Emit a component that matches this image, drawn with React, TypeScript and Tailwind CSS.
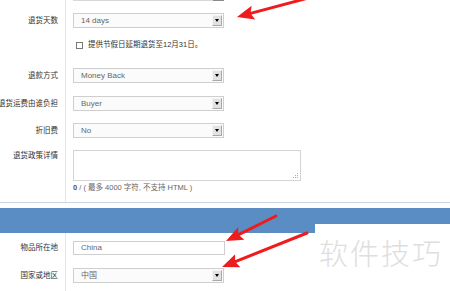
import React from 'react';

const font = { fontFamily: '"Liberation Sans", "Noto Sans CJK SC", sans-serif' };

function DropButton() {
  return (
    <div className="absolute right-[1px] top-[1px] bottom-[1px] w-[10px] bg-[#e2e2e2] border border-[#a8a8a8] border-t-[#f4f4f4] border-l-[#f4f4f4] flex items-center justify-center">
      <div className="w-0 h-0 border-l-[2.5px] border-r-[2.5px] border-t-[3px] border-l-transparent border-r-transparent border-t-black" />
    </div>
  );
}

function SelectBox({ value }: { value: string }) {
  return (
    <div className="relative w-[151px] h-[15px] border border-[#cfcfcf] bg-[#fbfbfb] flex items-center pl-[7px] text-[8px] text-[#666]">
      {value}
      <DropButton />
    </div>
  );
}

function Row({ label, pt, children, labelH = 15 }: { label?: string; pt: number; children?: React.ReactNode; labelH?: number }) {
  return (
    <div className="flex">
      <div className="w-[66px] shrink-0 border-r border-[#e6e6e6]" style={{ paddingTop: pt }}>
        {label && (
          <div className="flex items-center justify-end pr-[7px] whitespace-nowrap text-[7.5px] text-[#333]" style={{ height: labelH }}>
            {label}
          </div>
        )}
      </div>
      <div className="pl-[7px]" style={{ paddingTop: pt }}>
        {children}
      </div>
    </div>
  );
}

function Arrow({ x1, y1, x2, y2 }: { x1: number; y1: number; x2: number; y2: number }) {
  const dx = x2 - x1;
  const dy = y2 - y1;
  const len = Math.sqrt(dx * dx + dy * dy);
  const ux = dx / len;
  const uy = dy / len;
  const px = -uy;
  const py = ux;
  const headLen = 17;
  const headW = 7;
  const bx = x2 - ux * headLen;
  const by = y2 - uy * headLen;
  const head = `${x2},${y2} ${bx + px * headW},${by + py * headW} ${bx + ux * 3},${by + uy * 3} ${bx - px * headW},${by - py * headW}`;
  return (
    <g>
      <line x1={x1} y1={y1} x2={bx + ux * 4} y2={by + uy * 4} stroke="#ee1c1c" strokeWidth={3} strokeLinecap="round" />
      <polygon points={head} fill="#ee1c1c" />
    </g>
  );
}

export default function App() {
  return (
    <div className="relative w-[450px] h-[291px] overflow-hidden bg-white" style={font}>
      {/* top part of the form */}
      <div className="flex h-[1px]">
        <div className="w-[66px] shrink-0 border-r border-[#e6e6e6]" />
        <div className="pl-[7px] flex">
          <div className="w-[140px] h-[1px] bg-[#d8d8d8]" />
          <div className="w-[11px] h-[1px] bg-[#8a8a8a]" />
        </div>
      </div>

      <Row label="退货天数" pt={12}>
        <SelectBox value="14 days" />
      </Row>

      <Row pt={13}>
        <div className="flex items-center h-[8px] pl-[3px]">
          <div className="w-[7px] h-[7px] border border-[#777] bg-white" />
          <span className="ml-[5px] text-[7.5px] text-[#333] whitespace-nowrap">提供节假日延期退货至12月31日。</span>
        </div>
      </Row>

      <Row label="退款方式" pt={19}>
        <SelectBox value="Money Back" />
      </Row>

      <Row label="退货运费由谁负担" pt={13}>
        <SelectBox value="Buyer" />
      </Row>

      <Row label="折旧费" pt={12}>
        <SelectBox value="No" />
      </Row>

      <Row label="退货政策详情" pt={12} labelH={11}>
        <div className="relative w-[228px] h-[31px] border border-[#d4d4d4] bg-white">
          <svg className="absolute right-[1px] bottom-[1px]" width="7" height="7" viewBox="0 0 7 7">
            <rect x="5" y="1" width="1" height="1" fill="#aaa" />
            <rect x="3" y="3" width="1" height="1" fill="#aaa" />
            <rect x="5" y="3" width="1" height="1" fill="#aaa" />
            <rect x="1" y="5" width="1" height="1" fill="#aaa" />
            <rect x="3" y="5" width="1" height="1" fill="#aaa" />
            <rect x="5" y="5" width="1" height="1" fill="#aaa" />
          </svg>
        </div>
      </Row>

      <div className="flex">
        <div className="w-[66px] shrink-0 border-r border-[#e6e6e6] h-[21px]" />
        <div className="pl-[7px] pt-[3px] h-[10px] flex items-center text-[7.5px] text-[#666] whitespace-nowrap">
          <span className="font-bold text-[#555]">0</span>
          <span>&nbsp;/ ( 最多 4000 字符, 不支持 HTML )</span>
        </div>
      </div>

      <div className="h-[1px] bg-[#cad6e4]" />
      <div className="h-[5px]" />
      <div className="h-[25px] bg-[#5a8dc3]" />

      <Row label="物品所在地" pt={8} labelH={14}>
        <div className="w-[152px] h-[14px] border border-[#cfcfcf] bg-white flex items-center pl-[7px] text-[8px] text-[#666]">
          China
        </div>
      </Row>

      <Row label="国家或地区" pt={13}>
        <SelectBox value="中国" />
        <div className="h-[12px]" />
      </Row>

      {/* watermark patch */}
      <div className="absolute left-[315px] top-[224px] right-0 bottom-0 bg-white">
        <div
          className="absolute left-[4px] top-[14px] text-[29px] leading-none tracking-[2px] font-light text-[#dedede] whitespace-nowrap"
          style={{ fontFamily: '"Noto Sans CJK SC", sans-serif' }}
        >
          软件技巧
        </div>
      </div>

      <svg className="absolute inset-0 pointer-events-none" width="450" height="291">
        <Arrow x1={312} y1={-3} x2={237} y2={17} />
        <Arrow x1={276} y1={216} x2={226} y2={241} />
        <Arrow x1={307} y1={233} x2={222} y2={267} />
      </svg>
    </div>
  );
}
